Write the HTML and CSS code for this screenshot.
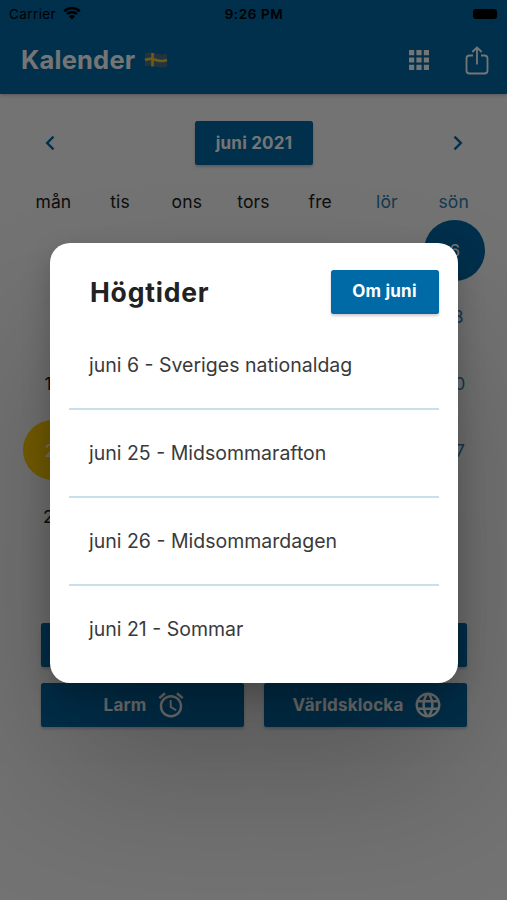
FILE: index.html
```
<!DOCTYPE html>
<html lang="sv">
<head>
    <meta charset="UTF-8">
    <title>Kalender</title>
    <link rel="stylesheet" href="styles.css">
</head>
<body>
    <header class="header">
        <div class="status-bar">
            <div class="carrier">
                <span>Carrier</span>
                <svg class="wifi" viewBox="0 0 18 14">
                    <path d="M1.3 5.2a11 11 0 0 1 15.4 0M4 8.2a7.1 7.1 0 0 1 10 0" fill="none" stroke="#000" stroke-width="2.6"/>
                    <path d="M5.9 10.3a4.4 4.4 0 0 1 6.2 0L9 13.5z"/>
                </svg>
            </div>
            <div class="time">9:26 PM</div>
            <div class="battery"></div>
        </div>
        <div class="toolbar">
            <h1>Kalender</h1>
            <svg class="flag" viewBox="0 0 24 16">
                <path d="M1 1.500Q6-.500 12 1.500T23 1.500V14.500Q18 16.500 12 14.500T1 14.500z" fill="#4f7288"/>
                <path d="M1 8Q6 6 12 8T23 8M8.500 1V14.500" fill="none" stroke="#f0c830" stroke-width="2.6"/>
            </svg>
            <svg class="apps" viewBox="0 0 20 20">
                <path d="M0 0h5.200v5.200H0zM7.400 0h5.200v5.200H7.400zM14.800 0H20v5.200h-5.200zM0 7.400h5.200v5.200H0zM7.400 7.400h5.200v5.200H7.400zM14.800 7.400H20v5.200h-5.200zM0 14.800h5.200V20H0zM7.400 14.800h5.200V20H7.400zM14.800 14.800H20V20h-5.200z" fill="#fff"/>
            </svg>
            <svg class="share" viewBox="0 0 24 30">
                <path d="M8 9.500H4.500A3 3 0 0 0 1.500 12.500V24.500A3 3 0 0 0 4.500 27.500H19.500A3 3 0 0 0 22.500 24.500V12.500A3 3 0 0 0 19.500 9.500H16M12 18.500V2M7.300 6 12 1.500 16.700 6" fill="none" stroke="#fff" stroke-width="1.8"/>
            </svg>
        </div>
    </header>

    <main>
        <div class="month-row">
            <svg class="arrow" viewBox="0 0 10 16"><path d="M8.500 1.700 2.200 8l6.300 6.300"/></svg>
            <button class="btn month-btn">juni 2021</button>
            <svg class="arrow" viewBox="0 0 10 16"><path d="M1.500 1.700 7.800 8l-6.300 6.300"/></svg>
        </div>

        <div class="weekdays">
            <span>mån</span><span>tis</span><span>ons</span><span>tors</span><span>fre</span>
            <span class="weekend">lör</span><span class="weekend">sön</span>
        </div>

        <div class="days">
            <span></span><span></span><span></span><span></span><span></span><span></span><span class="holiday">6</span>
            <span></span><span></span><span></span><span></span><span></span><span></span><span class="weekend">13</span>
            <span>14</span><span></span><span></span><span></span><span></span><span></span><span class="weekend">20</span>
            <span class="today">21</span><span></span><span></span><span></span><span></span><span></span><span class="weekend">27</span>
            <span>28</span>
        </div>

        <div class="actions">
            <button class="btn"></button>
            <button class="btn"></button>
            <button class="btn">
                Larm
                <svg class="icon" viewBox="0 0 24 24">
                    <path d="M22 5.720l-4.600-3.860-1.290 1.530 4.600 3.860L22 5.720zM7.880 3.390L6.600 1.860 2 5.710l1.290 1.530 4.590-3.850zM12.500 8H11v6l4.750 2.850.75-1.230-4-2.370V8zM12 4c-4.970 0-9 4.030-9 9s4.020 9 9 9c4.970 0 9-4.030 9-9s-4.030-9-9-9zm0 16c-3.870 0-7-3.130-7-7s3.130-7 7-7 7 3.130 7 7-3.130 7-7 7z"/>
                </svg>
            </button>
            <button class="btn">
                Världsklocka
                <svg class="icon" viewBox="0 0 24 24">
                    <path d="M11.990 2C6.470 2 2 6.480 2 12s4.470 10 9.990 10C17.520 22 22 17.520 22 12S17.520 2 11.990 2zm6.930 6h-2.950c-.32-1.250-.78-2.450-1.380-3.560 1.840.63 3.370 1.910 4.330 3.560zM12 4.040c.83 1.200 1.480 2.530 1.910 3.960h-3.820c.43-1.430 1.080-2.760 1.910-3.960zM4.260 14C4.100 13.360 4 12.690 4 12s.1-1.360.26-2h3.380c-.08.66-.14 1.320-.14 2s.06 1.340.14 2H4.260zm.82 2h2.950c.32 1.250.78 2.450 1.380 3.560-1.840-.63-3.370-1.900-4.330-3.560zm2.950-8H5.080c.96-1.660 2.490-2.930 4.330-3.560C8.810 5.550 8.350 6.750 8.030 8zM12 19.960c-.83-1.200-1.480-2.530-1.910-3.960h3.820c-.43 1.430-1.080 2.760-1.910 3.960zM14.340 14H9.660c-.09-.66-.16-1.320-.16-2s.07-1.350.16-2h4.680c.09.650.16 1.320.16 2s-.07 1.340-.16 2zm.25 5.560c.6-1.110 1.060-2.310 1.380-3.560h2.950c-.96 1.650-2.490 2.930-4.330 3.560zM16.360 14c.08-.66.14-1.320.14-2s-.06-1.340-.14-2h3.380c.16.640.26 1.310.26 2s-.1 1.360-.26 2h-3.380z"/>
                </svg>
            </button>
        </div>
    </main>

    <div class="overlay">
        <div class="dialog">
            <div class="dialog-header">
                <h2>Högtider</h2>
                <button class="btn about-btn">Om juni</button>
            </div>
            <ul class="holidays">
                <li>juni 6 - Sveriges nationaldag</li>
                <li>juni 25 - Midsommarafton</li>
                <li>juni 26 - Midsommardagen</li>
                <li>juni 21 - Sommar</li>
            </ul>
        </div>
    </div>
</body>
</html>
```
FILE: styles.css
```
* {
    box-sizing: border-box;
}
body {
    margin: 0;
    height: 900px;
    overflow: hidden;
    background-color: #fafafa;
    font-family: Inter, "Liberation Sans", sans-serif;
    color: #222222;
}
.header {
    height: 94px;
    background-color: #006aa7;
    box-shadow: 0 1px 4px rgba(0, 0, 0, 0.25);
}
.status-bar {
    display: grid;
    grid-template-columns: 1fr auto 1fr;
    align-items: center;
    height: 27px;
    padding: 0 10px 0 9px;
    color: #000000;
    font-size: 13.5px;
}
.carrier {
    display: flex;
    align-items: center;
    gap: 7px;
    letter-spacing: 0.4px;
}
.wifi {
    width: 18px;
    height: 14px;
    margin-top: -2px;
}
.time {
    padding-left: 2px;
    font-weight: 600;
    font-size: 13.5px;
    letter-spacing: 0.6px;
}
.battery {
    justify-self: end;
    width: 24px;
    height: 10px;
    border-radius: 3px;
    background-color: #000000;
}
.toolbar {
    display: flex;
    align-items: center;
    height: 65px;
    padding: 0 18px 0 21px;
}
h1 {
    margin: 0;
    color: #ffffff;
    font-size: 25.5px;
    font-weight: 700;
    letter-spacing: 0.2px;
}
.flag {
    width: 24px;
    height: 16px;
    margin-left: 9px;
}
.apps {
    width: 20px;
    height: 20px;
    margin-left: auto;
}
.share {
    width: 24px;
    height: 30px;
    margin: 3px 0 0 36px;
}
.month-row {
    display: flex;
    justify-content: space-between;
    align-items: center;
    padding: 27px 44px 0 45px;
}
.arrow {
    width: 10px;
    height: 16px;
    fill: none;
    stroke: #006aa7;
    stroke-width: 2.4;
}
.btn {
    display: flex;
    justify-content: center;
    align-items: center;
    height: 44px;
    padding: 0 0 1px;
    border: none;
    border-radius: 2.5px;
    background-color: #006aa7;
    box-shadow: 0 2px 3px rgba(0, 0, 0, 0.2);
    color: #ffffff;
    font-family: inherit;
    font-size: 17px;
    font-weight: 700;
    letter-spacing: 0.2px;
}
.month-btn {
    width: 118px;
}
.weekdays, .days {
    display: grid;
    grid-template-columns: repeat(7, 1fr);
    padding: 0 20px;
    text-align: center;
    font-size: 17.5px;
    letter-spacing: 0.1px;
}
.weekdays {
    margin-top: 26px;
    line-height: 22px;
}
.days {
    grid-auto-rows: 66.6px;
    margin-top: 4px;
    padding-right: 19px;
}
.days span {
    display: flex;
    justify-content: center;
    align-items: center;
    margin: 3px;
    letter-spacing: -0.3px;
}
.weekend {
    color: #2f80ad;
}
.days .holiday, .days .today {
    border-radius: 50%;
    background-color: #006aa7;
    color: #ffffff;
}
.days .today {
    background-color: #fecc00;
}
.actions {
    display: grid;
    grid-template-columns: 1fr 1fr;
    gap: 16.5px 20px;
    padding: 0 40px 0 41px;
    margin-top: 73px;
}
.actions .btn {
    padding: 0 0 0 5px;
}
.icon {
    width: 30px;
    height: 30px;
    margin-left: 10px;
    fill: #ffffff;
}
.overlay {
    position: absolute;
    top: 0;
    left: 0;
    width: 100%;
    height: 900px;
    padding: 243px 49px 0 50px;
    background-color: rgba(0, 0, 0, 0.54); /* dims the calendar */
}
.dialog {
    height: 440px;
    padding: 26.5px 19.5px 0 19px;
    border-radius: 20px;
    background-color: #ffffff;
    box-shadow: 0 12px 28px rgba(0, 0, 0, 0.22), 0 90px 150px rgba(0, 0, 0, 0.24);
}
.dialog-header {
    display: flex;
    justify-content: space-between;
    align-items: center;
    padding-left: 21px;
}
h2 {
    margin: 0;
    font-size: 26.5px;
    font-weight: 700;
    letter-spacing: 0.8px;
}
.about-btn {
    width: 108px;
}
.holidays {
    margin: 8px 0 0;
    padding: 0;
    list-style: none;
}
.holidays li {
    height: 88px;
    padding-left: 20px;
    border-bottom: 2px solid #c8dfec;
    color: #3a3a3a;
    font-size: 19.5px;
    line-height: 86px;
}
.holidays li:last-child {
    border-bottom: none;
}
```
